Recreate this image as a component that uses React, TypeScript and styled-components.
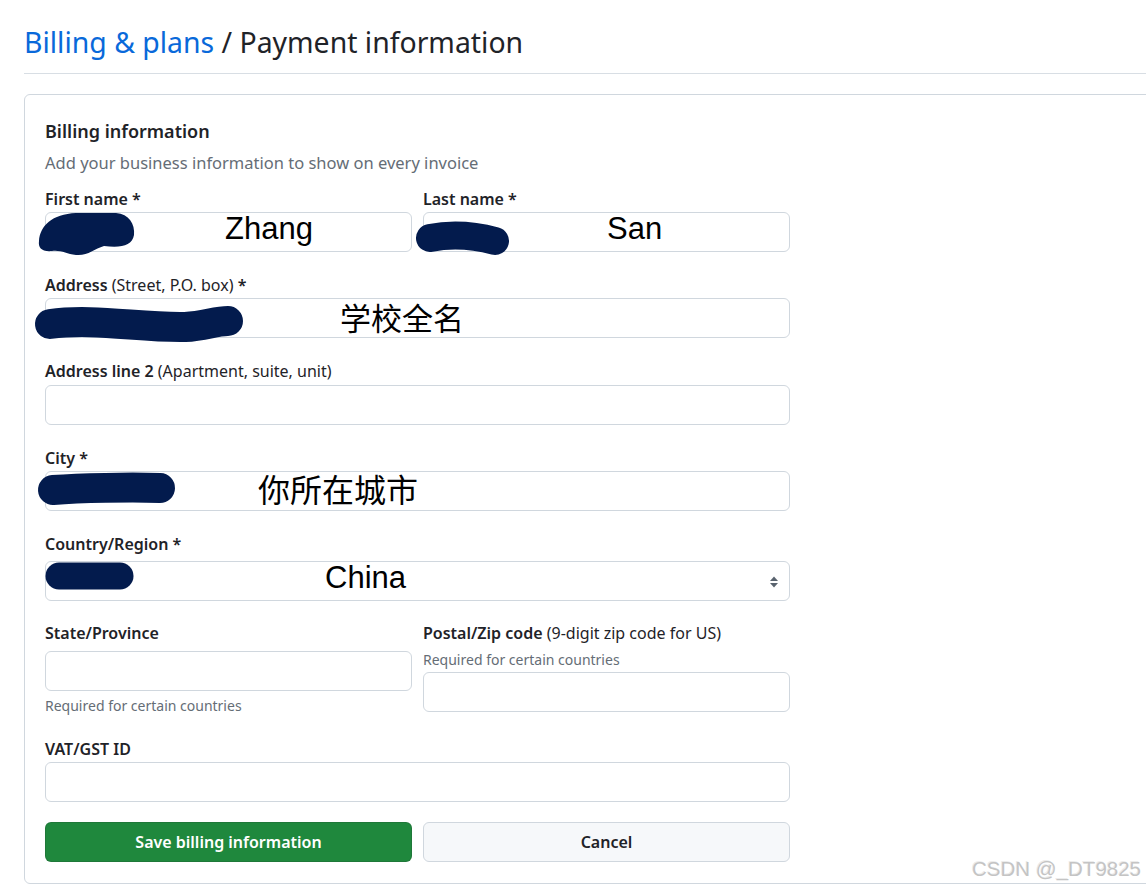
import React from "react";
import styled, { createGlobalStyle } from "styled-components";

const Global = createGlobalStyle`
  html, body { margin: 0; padding: 0; background: #ffffff; overflow: hidden; }
  body { font-family: "Noto Sans", "Segoe UI", sans-serif; color: #1f2328; }
  * { box-sizing: border-box; }
`;

const Page = styled.div`
  position: relative;
  width: 1146px;
  height: 889px;
  padding-left: 24px;
  overflow: hidden;
`;

const Inner = styled.div`
  width: 1180px;
`;

const Header = styled.div`
  padding: 22px 0 11px;
  border-bottom: 1px solid #d8dee4;
`;

const Title = styled.h2`
  margin: 0;
  font-size: 28.4px;
  line-height: 40px;
  font-weight: 400;
  color: #1f2328;
`;

const Crumb = styled.span`
  color: #0969da;
`;

const Card = styled.section`
  margin-top: 20px;
  border: 1px solid #d0d7de;
  border-radius: 6px;
  padding: 24px 20px 21px;
`;

const Form = styled.div`
  width: 745px;
  display: flex;
  flex-direction: column;
`;

const Heading = styled.h3`
  margin: 0;
  font-size: 18px;
  line-height: 24px;
  font-weight: 600;
`;

const Lead = styled.p`
  margin: 8px 0 14px;
  font-size: 16.5px;
  line-height: 24px;
  color: #656d76;
`;

const Row = styled.div<{ $gap?: number }>`
  display: grid;
  grid-template-columns: 367px 367px;
  column-gap: 11px;
  margin-bottom: ${(p) => p.$gap ?? 23}px;
`;

const Group = styled.div<{ $gap?: number }>`
  display: flex;
  flex-direction: column;
  margin-bottom: ${(p) => p.$gap ?? 0}px;
`;

const Label = styled.label<{ $space?: number }>`
  font-size: 16px;
  line-height: 20px;
  font-weight: 600;
  color: #1f2328;
  margin-bottom: ${(p) => p.$space ?? 3}px;
`;

const Hint = styled.span`
  font-weight: 400;
`;

const Note = styled.div<{ $top?: number; $bottom?: number }>`
  font-size: 14px;
  line-height: 18px;
  color: #656d76;
  margin-top: ${(p) => p.$top ?? 0}px;
  margin-bottom: ${(p) => p.$bottom ?? 0}px;
`;

const Field = styled.div`
  position: relative;
  height: 40px;
  border: 1px solid #d0d7de;
  border-radius: 6px;
  background: #ffffff;
`;

const Annotation = styled.span<{ $left: number; $top: number; $size?: number }>`
  position: absolute;
  left: ${(p) => p.$left}px;
  top: ${(p) => p.$top}px;
  font-family: "Liberation Sans", "Noto Sans CJK SC", sans-serif;
  font-size: ${(p) => p.$size ?? 31}px;
  line-height: 31px;
  color: #000000;
  white-space: nowrap;
`;

const Blot = styled.svg`
  position: absolute;
  overflow: visible;
  pointer-events: none;
`;

const Arrows = styled.svg`
  position: absolute;
  right: 10px;
  top: 13px;
`;

const Buttons = styled.div`
  display: grid;
  grid-template-columns: 367px 367px;
  column-gap: 11px;
`;

const Button = styled.button<{ $primary?: boolean }>`
  height: 40px;
  border-radius: 6px;
  font-family: inherit;
  font-size: 16px;
  font-weight: 600;
  border: 1px solid ${(p) => (p.$primary ? "rgba(31,35,40,0.15)" : "#d0d7de")};
  background: ${(p) => (p.$primary ? "#1f883d" : "#f6f8fa")};
  color: ${(p) => (p.$primary ? "#ffffff" : "#1f2328")};
  cursor: pointer;
`;

const Watermark = styled.div`
  position: absolute;
  right: 5px;
  bottom: 8px;
  font-family: "Liberation Sans", sans-serif;
  font-size: 20.5px;
  color: #c4c4c4;
  text-shadow: 1px 1px 0 #ffffff, -1px -1px 0 #9a9a9a33;
`;

const INK = "#031b4d";

/* Redaction strokes: coordinates in page space, placed relative to the field's top-left */
function Redaction({
  fx,
  fy,
  box,
  children,
}: {
  fx: number;
  fy: number;
  box: [number, number, number, number];
  children: React.ReactNode;
}) {
  const [x, y, w, h] = box;
  return (
    <Blot
      style={{ left: x - fx - 1, top: y - fy - 1 }}
      width={w}
      height={h}
      viewBox={`${x} ${y} ${w} ${h}`}
    >
      {children}
    </Blot>
  );
}

export default function App() {
  return (
    <>
      <Global />
      <Page>
        <Inner>
          <Header>
            <Title>
              <Crumb>Billing &amp; plans</Crumb> / Payment information
            </Title>
          </Header>
          <Card>
            <Form>
              <Heading>Billing information</Heading>
              <Lead>Add your business information to show on every invoice</Lead>

              <Row>
                <Group>
                  <Label>First name *</Label>
                  <Field>
                    <Redaction fx={45} fy={212} box={[30, 205, 115, 55]}>
                      <path
                        fill={INK}
                        d="M39 241 C40 226 52 214 76 213 L116 213 C129 214 135 224 134 235 C132 246 121 248 104 246 C94 249 88 256 76 255 C66 254 62 250 52 251 C42 252 38 248 39 241 Z"
                      />
                    </Redaction>
                    <Annotation $left={179} $top={0}>Zhang</Annotation>
                  </Field>
                </Group>
                <Group>
                  <Label>Last name *</Label>
                  <Field>
                    <Redaction fx={422} fy={212} box={[405, 210, 115, 55]}>
                      <path
                        d="M429 238 C455 233 475 236 494 241"
                        stroke={INK}
                        strokeWidth={28}
                        strokeLinecap="round"
                        fill="none"
                      />
                    </Redaction>
                    <Annotation $left={183} $top={0}>San</Annotation>
                  </Field>
                </Group>
              </Row>

              <Group $gap={23}>
                <Label>
                  Address <Hint>(Street, P.O. box)</Hint> *
                </Label>
                <Field>
                  <Redaction fx={45} fy={298} box={[25, 295, 235, 60]}>
                    <path
                      d="M50 324 C95 318 140 328 185 327 C205 326 215 321 228 321"
                      stroke={INK}
                      strokeWidth={30}
                      strokeLinecap="round"
                      fill="none"
                    />
                  </Redaction>
                  <Annotation $left={294} $top={5}>学校全名</Annotation>
                </Field>
              </Group>

              <Group $gap={23}>
                <Label $space={4}>
                  Address line 2 <Hint>(Apartment, suite, unit)</Hint>
                </Label>
                <Field />
              </Group>

              <Group $gap={23}>
                <Label>City *</Label>
                <Field>
                  <Redaction fx={45} fy={471} box={[30, 465, 160, 50]}>
                    <path
                      d="M53 490 C80 488 130 487 160 488"
                      stroke={INK}
                      strokeWidth={30}
                      strokeLinecap="round"
                      fill="none"
                    />
                  </Redaction>
                  <Annotation $left={212} $top={4} $size={32}>你所在城市</Annotation>
                </Field>
              </Group>

              <Group $gap={22}>
                <Label $space={7}>Country/Region *</Label>
                <Field>
                  <Redaction fx={45} fy={561} box={[40, 555, 105, 45]}>
                    <path
                      d="M59 576 L120 576"
                      stroke={INK}
                      strokeWidth={27}
                      strokeLinecap="round"
                      fill="none"
                    />
                  </Redaction>
                  <Annotation $left={279} $top={0}>China</Annotation>
                  <Arrows width="10" height="14" viewBox="0 0 10 14">
                    <path d="M5 1.5 L9 6 L1 6 Z" fill="#59636e" />
                    <path d="M5 12.5 L9 8 L1 8 Z" fill="#59636e" />
                  </Arrows>
                </Field>
              </Group>

              <Row $gap={24}>
                <Group>
                  <Label $space={8}>State/Province</Label>
                  <Field />
                  <Note $top={6}>Required for certain countries</Note>
                </Group>
                <Group>
                  <Label $space={8}>
                    Postal/Zip code <Hint>(9-digit zip code for US)</Hint>
                  </Label>
                  <Note $bottom={3}>Required for certain countries</Note>
                  <Field />
                </Group>
              </Row>

              <Group $gap={20}>
                <Label>VAT/GST ID</Label>
                <Field />
              </Group>

              <Buttons>
                <Button $primary>Save billing information</Button>
                <Button>Cancel</Button>
              </Buttons>
            </Form>
          </Card>
        </Inner>
        <Watermark>CSDN @_DT9825</Watermark>
      </Page>
    </>
  );
}
